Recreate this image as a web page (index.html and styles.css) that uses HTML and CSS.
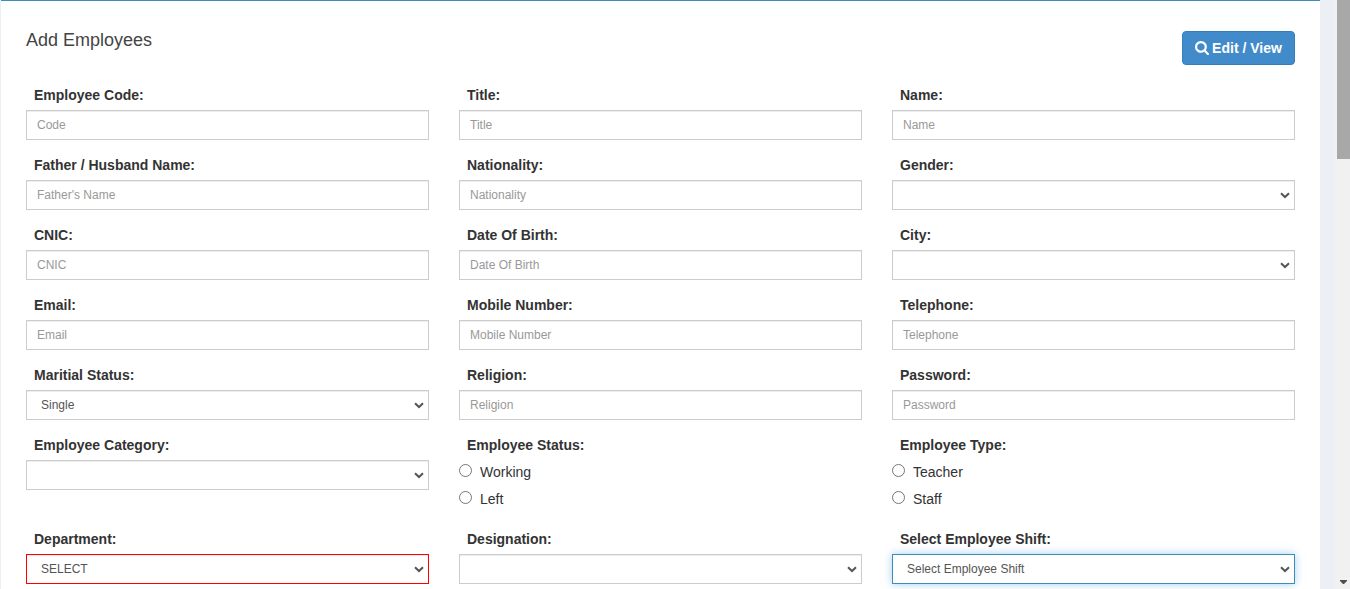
FILE: index.html
```
<!DOCTYPE html>
<html lang="en">
<head>
<meta charset="utf-8">
<title>Add Employees</title>
<link rel="stylesheet" href="styles.css">
</head>
<body>
<div class="page">
  <main class="box">
    <header class="box-header">
      <h3 class="box-title">Add Employees</h3>
      <button class="btn" type="button"><svg class="btn-icon" viewBox="0 0 1664 1664"><path fill="#fff" d="M1152 704q0-185-131.500-316.500T704 256 387.500 387.500 256 704t131.500 316.500T704 1152t316.500-131.500T1152 704zm512 832q0 52-38 90t-90 38q-54 0-90-38l-343-342q-179 124-399 124-143 0-273.500-55.500t-225-150-150-225T0 704t55.500-273.500 150-225 225-150T704 0t273.500 55.500 225 150 150 225T1408 704q0 220-124 399l343 343q37 37 37 90z"/></svg><span>Edit / View</span></button>
    </header>
    <form class="form">
      <div class="field"><label class="label">Employee Code:</label><input class="control" placeholder="Code"></div>
      <div class="field"><label class="label">Title:</label><input class="control" placeholder="Title"></div>
      <div class="field"><label class="label">Name:</label><input class="control" placeholder="Name"></div>

      <div class="field"><label class="label">Father / Husband Name:</label><input class="control" placeholder="Father's Name"></div>
      <div class="field"><label class="label">Nationality:</label><input class="control" placeholder="Nationality"></div>
      <div class="field"><label class="label">Gender:</label><select class="control select"><option></option></select></div>

      <div class="field"><label class="label">CNIC:</label><input class="control" placeholder="CNIC"></div>
      <div class="field"><label class="label">Date Of Birth:</label><input class="control" placeholder="Date Of Birth"></div>
      <div class="field"><label class="label">City:</label><select class="control select"><option></option></select></div>

      <div class="field"><label class="label">Email:</label><input class="control" placeholder="Email"></div>
      <div class="field"><label class="label">Mobile Number:</label><input class="control" placeholder="Mobile Number"></div>
      <div class="field"><label class="label">Telephone:</label><input class="control" placeholder="Telephone"></div>

      <div class="field"><label class="label">Maritial Status:</label><select class="control select"><option>Single</option></select></div>
      <div class="field"><label class="label">Religion:</label><input class="control" placeholder="Religion"></div>
      <div class="field"><label class="label">Password:</label><input class="control" placeholder="Password"></div>

      <div class="field"><label class="label">Employee Category:</label><select class="control select"><option></option></select></div>
      <div class="field radios"><label class="label">Employee Status:</label>
        <label class="choice"><input class="radio" type="radio" name="status"><span>Working</span></label>
        <label class="choice"><input class="radio" type="radio" name="status"><span>Left</span></label>
      </div>
      <div class="field radios"><label class="label">Employee Type:</label>
        <label class="choice"><input class="radio" type="radio" name="type"><span>Teacher</span></label>
        <label class="choice"><input class="radio" type="radio" name="type"><span>Staff</span></label>
      </div>

      <div class="field"><label class="label">Department:</label><select class="control select invalid"><option>SELECT</option></select></div>
      <div class="field"><label class="label">Designation:</label><select class="control select"><option></option></select></div>
      <div class="field"><label class="label">Select Employee Shift:</label><select class="control select active"><option>Select Employee Shift</option></select></div>
    </form>
  </main>
  <div class="scrollbar">
    <div class="thumb"></div>
    <svg class="arrow" viewBox="0 0 7 4"><path fill="#505050" d="M0 0h7v1L4 4H3L0 1z"/></svg>
  </div>
</div>
</body>
</html>
```
FILE: styles.css
```
* { box-sizing: border-box; }
body {
  margin: 0;
  overflow: hidden;
  background: #ecf0f5;
  font: 14px/20px "Liberation Sans", Arial, sans-serif;
  color: #333;
}
.page {
  display: flex;
  justify-content: space-between;
  height: 589px;
  padding-left: 1px;
  overflow: hidden;
}
.box {
  width: 1319px;
  height: 660px;
  padding: 30px 25px 0;
  border-top: 1px solid #3c8dbc;
  background: #fff;
}
.box-header {
  display: flex;
  justify-content: space-between;
  height: 54px;
}
.box-title {
  margin: 0;
  font-size: 18px;
  font-weight: 400;
  line-height: 18px;
  color: #444;
}
.btn {
  display: flex;
  align-items: center;
  justify-content: center;
  gap: 3px;
  width: 113px;
  height: 34px;
  padding: 0;
  border: 1px solid #357ebd;
  border-radius: 4px;
  background: #428bca;
  color: #fff;
  font: bold 14px/20px "Liberation Sans", Arial, sans-serif;
}
.btn-icon { width: 14px; height: 14px; }
.form {
  display: grid;
  grid-template-columns: repeat(3, 403px);
  column-gap: 30px;
}
.field {
  display: flex;
  flex-direction: column;
  min-height: 70px;
}
.label {
  margin-bottom: 5px;
  padding-left: 8px;
  font-weight: 700;
}
.control {
  width: 100%;
  height: 30px;
  padding: 5px 10px;
  border: 1px solid #ccc;
  border-radius: 0;
  background: #fff;
  box-shadow: inset 0 1px 1px rgba(0, 0, 0, .075);
  color: #555;
  font: 12px/18px "Liberation Sans", Arial, sans-serif;
}
.control::placeholder { color: #999; opacity: 1; }
.select {
  appearance: none;
  padding: 5px 14px;
  background: #fff url("data:image/svg+xml,%3Csvg xmlns='http://www.w3.org/2000/svg' width='10' height='7' viewBox='0 0 10 7'%3E%3Cpath d='M1 1.200l4 3.800 4-3.800' fill='none' stroke='%23555' stroke-width='2'/%3E%3C/svg%3E") no-repeat right 4px top 11px;
}
.invalid { border-color: #f00; }
.active {
  border-color: #3c8dbc;
  box-shadow: 0 0 8px rgba(102, 175, 233, .6);
}
.radios { height: 94px; }
.choice {
  display: flex;
  gap: 8px;
  height: 27px;
  padding-top: 2px;
}
.radio { width: 13px; height: 13px; margin: 2px 0 0; }
.scrollbar {
  display: flex;
  flex-direction: column;
  align-items: flex-end;
  justify-content: space-between;
  width: 15px;
  height: 589px;
  background: #f1f1f1;
}
.thumb { width: 13px; height: 159px; background: #a8a8a8; }
.arrow { width: 7px; height: 4px; margin: 0 3px 5px 0; }
```
